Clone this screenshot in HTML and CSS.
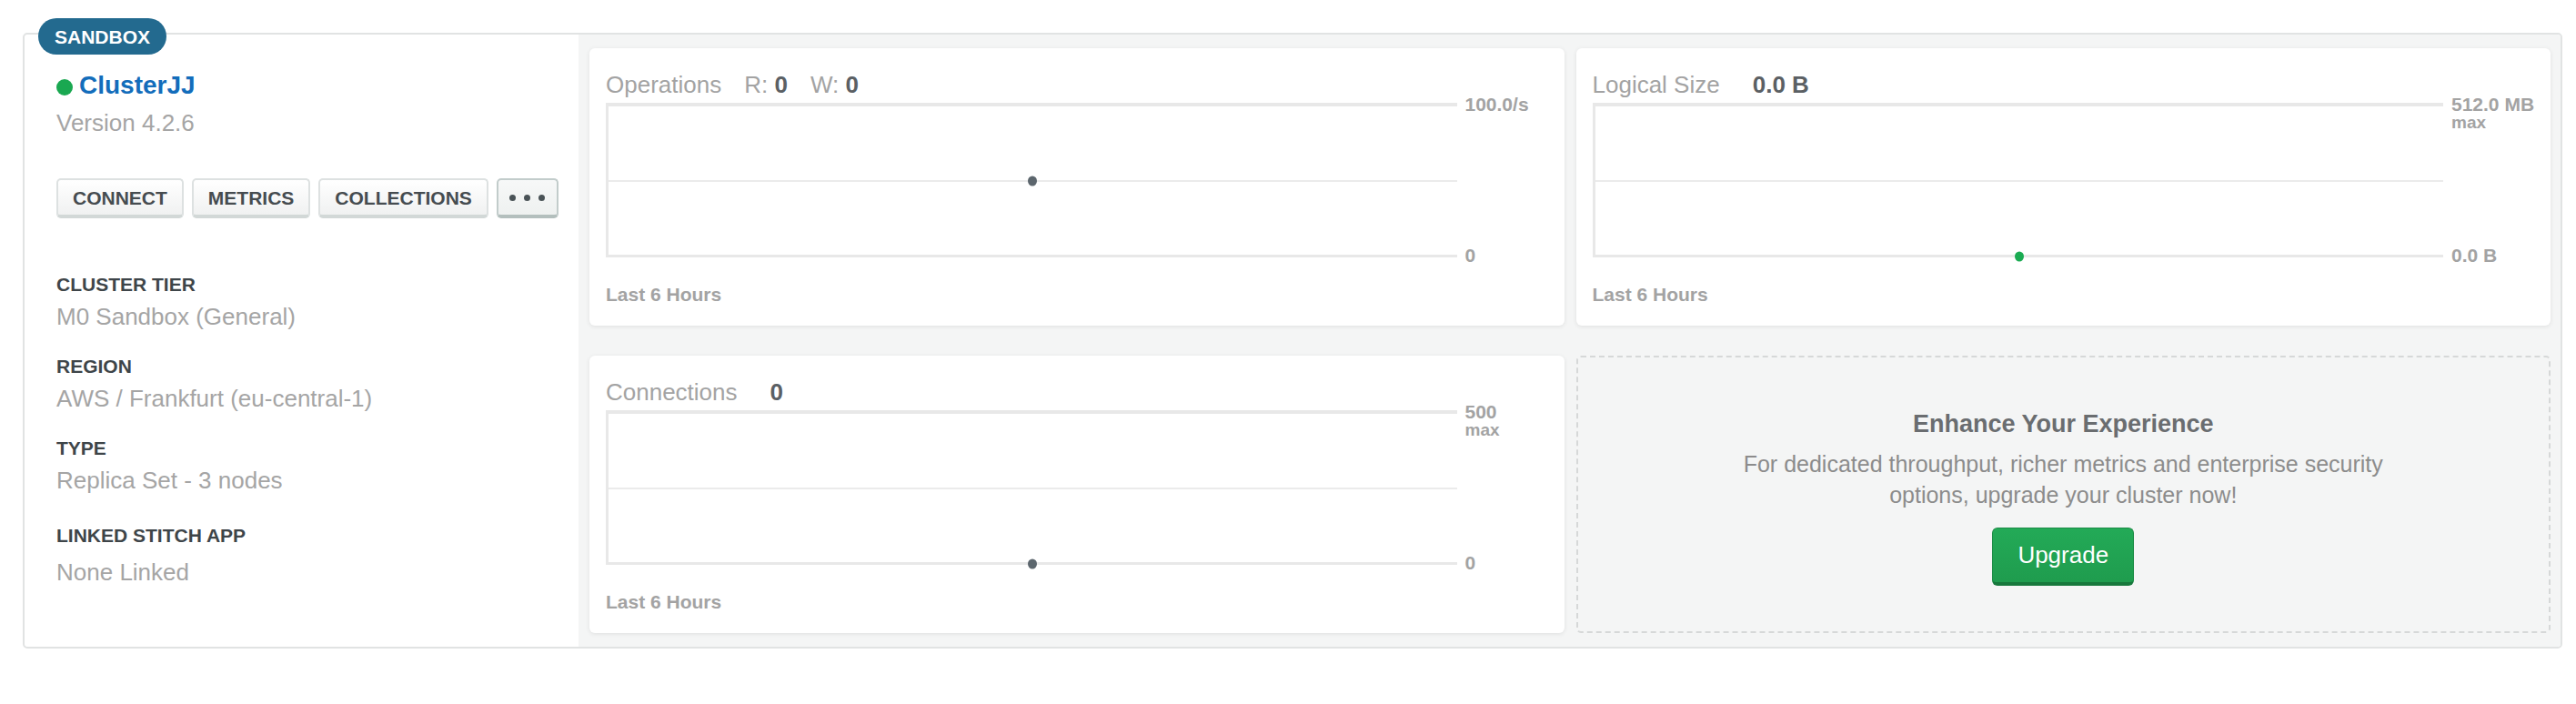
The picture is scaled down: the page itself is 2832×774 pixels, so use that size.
FILE: index.html
```html
<!DOCTYPE html>
<html lang="en">
<head>
<meta charset="utf-8">
<title>ClusterJJ</title>
<link rel="stylesheet" href="styles.css">
</head>
<body>
<div class="page">
  <div class="cluster">
    <span class="badge">SANDBOX</span>

    <section class="info">
      <div class="name-row">
        <span class="status"></span>
        <span class="name">ClusterJJ</span>
      </div>
      <div class="version">Version 4.2.6</div>
      <div class="actions">
        <button class="btn">CONNECT</button>
        <button class="btn">METRICS</button>
        <button class="btn">COLLECTIONS</button>
        <button class="btn btn-more"><span class="pip"></span><span class="pip"></span><span class="pip"></span></button>
      </div>
      <dl class="meta">
        <div class="meta-item"><dt>CLUSTER TIER</dt><dd>M0 Sandbox (General)</dd></div>
        <div class="meta-item"><dt>REGION</dt><dd>AWS / Frankfurt (eu-central-1)</dd></div>
        <div class="meta-item"><dt>TYPE</dt><dd>Replica Set - 3 nodes</dd></div>
        <div class="meta-item meta-item-last"><dt>LINKED STITCH APP</dt><dd>None Linked</dd></div>
      </dl>
    </section>

    <section class="charts">
      <div class="card">
        <div class="card-title"><span class="metric-name">Operations</span><span class="metric-pair">R: <b>0</b></span><span class="metric-pair">W: <b>0</b></span></div>
        <div class="chart">
          <div class="plot"><span class="dot dot-mid"></span></div>
          <div class="axis">
            <span class="axis-top">100.0/s</span>
            <span class="axis-bottom">0</span>
          </div>
        </div>
        <div class="range">Last 6 Hours</div>
      </div>

      <div class="card">
        <div class="card-title"><span class="metric-name">Logical Size</span><b class="metric-value">0.0 B</b></div>
        <div class="chart">
          <div class="plot"><span class="dot dot-low dot-green"></span></div>
          <div class="axis">
            <span class="axis-top">512.0 MB<span class="axis-sub">max</span></span>
            <span class="axis-bottom">0.0 B</span>
          </div>
        </div>
        <div class="range">Last 6 Hours</div>
      </div>

      <div class="card">
        <div class="card-title"><span class="metric-name">Connections</span><b class="metric-value">0</b></div>
        <div class="chart">
          <div class="plot"><span class="dot dot-low"></span></div>
          <div class="axis">
            <span class="axis-top">500<span class="axis-sub">max</span></span>
            <span class="axis-bottom">0</span>
          </div>
        </div>
        <div class="range">Last 6 Hours</div>
      </div>

      <div class="upgrade">
        <h3 class="upgrade-title">Enhance Your Experience</h3>
        <p class="upgrade-text">For dedicated throughput, richer metrics and enterprise security options, upgrade your cluster now!</p>
        <button class="btn-upgrade">Upgrade</button>
      </div>
    </section>
  </div>
</div>
</body>
</html>
```

FILE: styles.css
```css
* { box-sizing: border-box; }

body {
  margin: 0;
  background: #ffffff;
  font-family: "Liberation Sans", Arial, Helvetica, sans-serif;
}

.page {
  padding: 36px 15px 0 25px;
}

.cluster {
  position: relative;
  display: grid;
  grid-template-columns: 609px 1fr;
  border: 2px solid #e1e3e3;
  border-radius: 5px;
  background: #ffffff;
}

.badge {
  position: absolute;
  top: -18px;
  left: 15px;
  height: 40px;
  padding: 0 18px;
  border-radius: 20px;
  background: #236a8f;
  color: #ffffff;
  font-size: 21px;
  font-weight: bold;
  line-height: 41px;
}

/* left info panel */
.info {
  padding: 39px 20px 0 35px;
}

.name-row {
  display: flex;
  align-items: center;
  height: 34px;
}

.status {
  width: 18px;
  height: 18px;
  margin-top: 3px;
  margin-right: 7px;
  border-radius: 50%;
  background: #1aa851;
}

.name {
  color: #136dbb;
  font-size: 28px;
  font-weight: bold;
  line-height: 34px;
}

.version {
  margin-top: 8px;
  color: #a5a5a5;
  font-size: 26px;
  line-height: 32px;
}

.actions {
  display: flex;
  gap: 9px;
  margin-top: 45px;
}

.btn {
  height: 44px;
  padding: 0 16px;
  border: 2px solid #dde1e1;
  border-bottom: 4px solid #d2d8d7;
  border-radius: 5px;
  background: linear-gradient(#ffffff, #f0f1f1);
  color: #464c50;
  font-family: inherit;
  font-size: 21px;
  font-weight: bold;
  line-height: 1;
}

.btn-more {
  display: flex;
  align-items: center;
  justify-content: center;
  gap: 9px;
  width: 68px;
  padding: 0;
  border-color: #c2cccb;
  border-bottom-color: #b3bfbd;
  background: linear-gradient(#f7f8f8, #eef1f0);
}

.pip {
  width: 7px;
  height: 7px;
  border-radius: 50%;
  background: #4a5357;
}

.meta {
  margin: 61px 0 0;
}

.meta-item + .meta-item {
  margin-top: 27px;
}

.meta-item + .meta-item-last {
  margin-top: 33px;
}

.meta dt {
  color: #3e4549;
  font-size: 21px;
  font-weight: bold;
  line-height: 24px;
}

.meta dd {
  margin: 7px 0 0;
  color: #a5a5a5;
  font-size: 26px;
  line-height: 32px;
}

.meta-item-last dd {
  margin-top: 12px;
}

/* right metrics area */
.charts {
  display: grid;
  grid-template-columns: 1fr 1fr;
  column-gap: 13px;
  row-gap: 33px;
  padding: 15px 11px 15px 12px;
  background: #f4f5f5;
  border-radius: 0 3px 3px 0;
}

.card {
  padding: 25px 0 22px 18px;
  border-radius: 6px;
  background: #ffffff;
  box-shadow: 0 1px 5px rgba(0, 0, 0, 0.09);
}

.card-title {
  color: #a3a3a3;
  font-size: 26px;
  line-height: 30px;
  white-space: nowrap;
}

.card-title b {
  color: #5b6064;
}

.metric-pair {
  margin-left: 25px;
}

.metric-value {
  margin-left: 36px;
}

.chart {
  display: flex;
  margin-top: 5px;
  height: 170px;
}

.plot {
  position: relative;
  flex: 1;
  border-top: 4px solid #e8e8e8;
  border-bottom: 3px solid #e8e8e8;
  border-left: 3px solid #e8e8e8;
}

.plot::after {
  content: "";
  position: absolute;
  left: 0;
  right: 0;
  top: calc(50% - 1px);
  height: 2px;
  background: #ebebeb;
}

.dot {
  position: absolute;
  z-index: 1;
  left: 50%;
  width: 10px;
  height: 11px;
  border-radius: 50%;
  background: #5c666d;
  transform: translate(-50%, -50%);
}

.dot-mid { top: 50%; }
.dot-low { top: calc(100% + 1.5px); }
.dot-green { background: #1aab52; }

.axis {
  position: relative;
  width: 118px;
  color: #a3a3a3;
  font-size: 21px;
  font-weight: bold;
  line-height: 17px;
  white-space: nowrap;
}

.axis-top {
  position: absolute;
  top: -7px;
  left: 9px;
}

.axis-sub {
  display: block;
  margin-top: 4px;
  font-size: 19px;
  line-height: 16px;
}

.axis-bottom {
  position: absolute;
  bottom: -6px;
  left: 9px;
}

.range {
  margin-top: 29px;
  color: #a3a3a3;
  font-size: 21px;
  font-weight: bold;
  line-height: 24px;
}

/* upgrade prompt */
.upgrade {
  display: flex;
  flex-direction: column;
  align-items: center;
  justify-content: center;
  padding-top: 6px;
  border: 2px dashed #d6d8d8;
  border-radius: 5px;
  text-align: center;
}

.upgrade-title {
  margin: 0;
  color: #6a6d70;
  font-size: 27px;
  font-weight: bold;
  line-height: 32px;
}

.upgrade-text {
  max-width: 740px;
  margin: 11px 0 0;
  color: #8c8c8c;
  font-size: 25px;
  line-height: 34px;
}

.btn-upgrade {
  height: 64px;
  margin-top: 19px;
  padding: 0 27px;
  border: 1px solid #1b8b45;
  border-bottom: 4px solid #17783c;
  border-radius: 6px;
  background: linear-gradient(#23aa57, #1f9c4e);
  color: #ffffff;
  font-family: inherit;
  font-size: 26px;
}
```
